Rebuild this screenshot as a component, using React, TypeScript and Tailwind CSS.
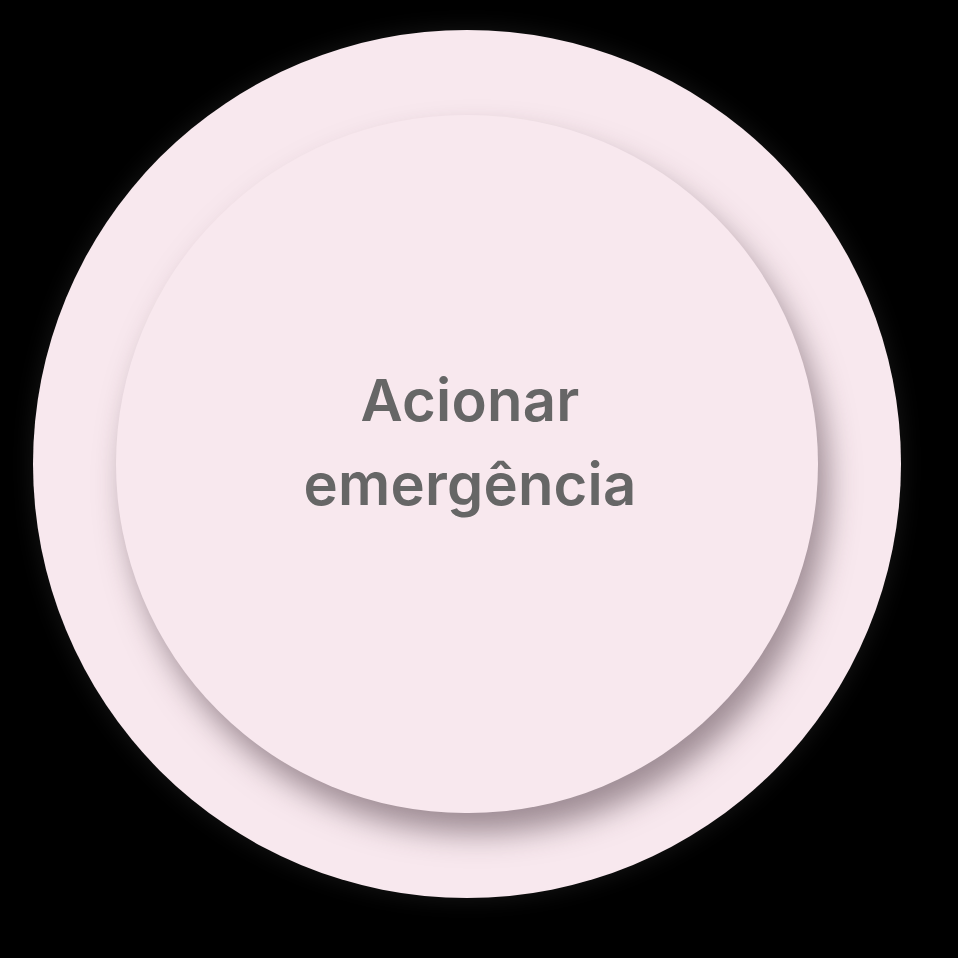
import React from 'react';

const App: React.FC = () => {
  return (
    <div className="w-[958px] h-[958px] bg-black overflow-hidden" style={{ fontFamily: 'Inter, "Noto Sans", sans-serif' }}>
      <div className="pt-[30px] pl-[33px]">
        <div className="w-[868px] h-[868px] rounded-full bg-[#f8e8ee] flex items-center justify-center shadow-[0_0_24px_rgba(45,45,45,0.5)]">
          <button className="w-[702px] h-[698px] rounded-full bg-[#f8e8ee] flex items-center justify-center shadow-[10px_20px_30px_rgba(70,50,60,0.5)] pb-[44px] pl-[6px]">
            <span className="text-[58px] leading-[84px] font-semibold text-[#666666] text-center tracking-[0.2px]">
              Acionar
              <br />
              emergência
            </span>
          </button>
        </div>
      </div>
    </div>
  );
};

export default App;
